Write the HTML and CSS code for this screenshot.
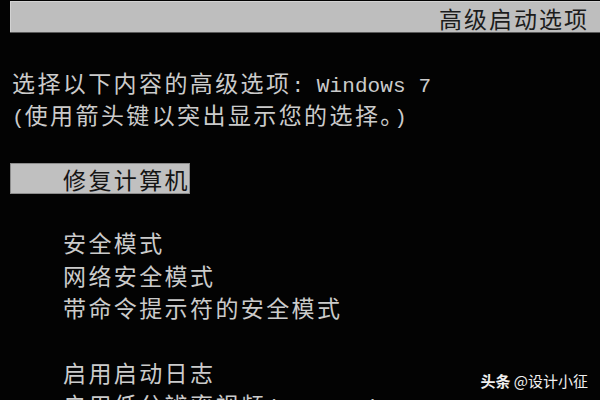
FILE: index.html
```html
<!DOCTYPE html>
<html lang="zh-CN">
<head>
  <meta charset="UTF-8" />
  <meta name="viewport" content="width=device-width, initial-scale=1.0"/>
  <title>高级启动选项</title>
  <link rel="stylesheet" href="styles.css">
</head>
<body>

  <header class="title-bar">
    <h1>高级启动选项</h1>
  </header>

  <main class="console">
    <div class="line">选择以下内容的高级选项<span class="en">: Windows 7</span></div>
    <div class="line"><span class="en">(</span>使用箭头键以突出显示您的选择。<span class="en">)</span></div>
    <div class="line"></div>

    <ul class="menu">
      <li class="selected">修复计算机</li>
      <li class="blank"></li>
      <li>安全模式</li>
      <li>网络安全模式</li>
      <li>带命令提示符的安全模式</li>
      <li class="blank"></li>
      <li>启用启动日志</li>
      <li>启用低分辨率视频<span class="en">(640x480)</span></li>
    </ul>
  </main>

  <div class="watermark"><b>头条</b> @设计小征</div>

</body>
</html>
```

FILE: styles.css
```css
html, body {height: 100%; overflow: hidden;}
body {margin: 0; background-color: #030303; color: #cbcbcb; font-family: "Noto Sans CJK SC", "Liberation Sans", sans-serif; position: relative;}

.title-bar {margin: 1px 0 0 10px; height: 31px; background-color: #bebebe; border-bottom: 1px solid #5a5a5a; box-shadow: inset 1px 1px 0 #d2d2d2; text-align: right; padding-right: 11px;}
.title-bar h1 {margin: 0; font-size: 23px; font-weight: normal; line-height: 34px; letter-spacing: 2px; color: #1c1c1c;}

.console {padding: 33px 0 0 12px; font-size: 23px; letter-spacing: 2.4px;}
.line, .menu li {height: 32.33px; line-height: 32.33px; white-space: nowrap;}
.en {font-family: "Liberation Mono", monospace; font-size: 21px; letter-spacing: 0.1px;}

.menu {list-style: none; margin: 0; padding: 0;}
.menu li {padding-left: 51px;}
.menu li.selected {margin-left: -2px; width: 127px; padding-left: 53px; height: 31px; line-height: 33px; background-color: #c0c0c0; color: #151515; box-shadow: inset 0 0 0 1px #8c8c8c;}

.watermark {position: absolute; right: 12px; top: 371px; font-size: 15px; color: #f0f0f0; letter-spacing: 0; line-height: 20px;}
.watermark b {font-weight: bold;}
```
